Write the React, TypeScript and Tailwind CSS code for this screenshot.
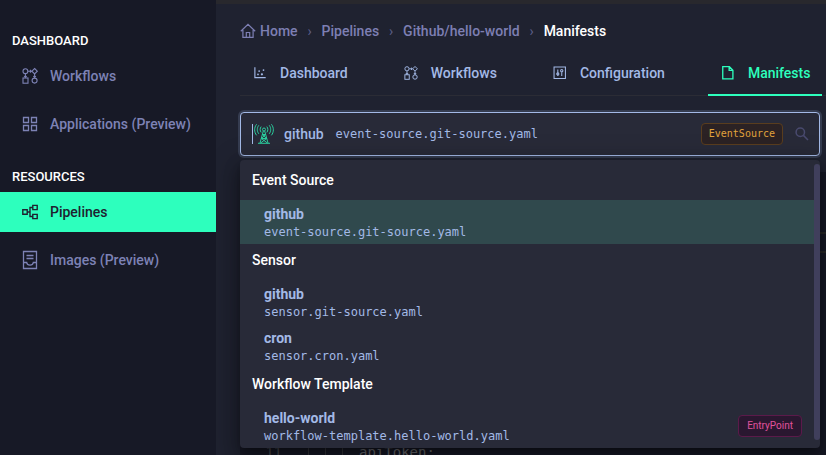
import React from "react";

type IconProps = { className?: string };

function FlowIcon({ className }: IconProps) {
  return (
    <svg viewBox="0 0 16 16" fill="none" stroke="currentColor" strokeWidth="1.1" className={className} aria-hidden="true">
      <circle cx="3.4" cy="3.2" r="2.4" />
      <path d="M12.6.5 15.3 3.2 12.6 5.9 9.9 3.2Z" />
      <rect x="1" y="10" width="5" height="5.2" />
      <circle cx="12.6" cy="12.6" r="2.5" />
      <path d="M6 3.2h3.6M8 1.9l1.4 1.3L8 4.5M3.4 5.8V10M2.1 8l1.3 1.5L4.7 8M12.6 6v4M11.3 8l1.3 1.5L13.9 8" />
    </svg>
  );
}

function GridIcon({ className }: IconProps) {
  return (
    <svg viewBox="0 0 16 16" fill="none" stroke="currentColor" strokeWidth="1.3" className={className} aria-hidden="true">
      <path d="M1.5 1.5h5v5h-5zM9.5 1.5h5v5h-5zM1.5 9.5h5v5h-5zM9.5 9.5h5v5h-5z" />
    </svg>
  );
}

function PipelineIcon({ className }: IconProps) {
  return (
    <svg viewBox="0 0 16 16" fill="none" stroke="currentColor" strokeWidth="1.4" className={className} aria-hidden="true">
      <path d="M.8 5.8h4.4v4.400H.8zM10.8 1.400h4.400v4.200h-4.400zM10.800 10.400h4.400v4.200h-4.400zM5.200 8H8M10.800 3.500H8v9h2.800" />
    </svg>
  );
}

function ImagesIcon({ className }: IconProps) {
  return (
    <svg viewBox="0 0 16 16" fill="none" stroke="currentColor" strokeWidth="1.3" className={className} aria-hidden="true">
      <path d="M1.500-.500h13v17h-13zM4.500 3.500h7M4.500 6.500h7M1.500 10.500h3.200c.5 3.500 6.100 3.500 6.600 0h3.200" />
    </svg>
  );
}

function HomeIcon({ className }: IconProps) {
  return (
    <svg viewBox="0 0 16 16" fill="none" stroke="currentColor" strokeWidth="1.2" className={className} aria-hidden="true">
      <path d="M.8 8.300 8 1.400l7.200 6.900M2.900 7v7.400h10.200V7M6.300 14.300V9.500h3.400v4.800" />
    </svg>
  );
}

function ChartIcon({ className }: IconProps) {
  return (
    <svg viewBox="0 0 16 16" fill="currentColor" className={className} aria-hidden="true">
      <path d="M1.500 1.500h1.300v11.200H14.500V14H1.500z" />
      <circle cx="5.700" cy="9.700" r="1" />
      <circle cx="7" cy="5.800" r="1" />
      <circle cx="10.200" cy="9.500" r="1.300" />
      <circle cx="12" cy="4.700" r="1" />
    </svg>
  );
}

function SlidersIcon({ className }: IconProps) {
  return (
    <svg viewBox="0 0 16 16" fill="none" stroke="currentColor" strokeWidth="1.2" className={className} aria-hidden="true">
      <path d="M1.200 1.200h13v13h-13zM5.500 4v7.500M10 7v4.500" />
      <circle cx="5.500" cy="9" r="1.200" />
      <circle cx="10" cy="5.400" r="1.300" />
    </svg>
  );
}

function FileIcon({ className }: IconProps) {
  return (
    <svg viewBox="0 0 16 16" fill="none" stroke="currentColor" strokeWidth="1.5" className={className} aria-hidden="true">
      <path d="M2 .8h7.600L13.600 4.800v9.900H2zM9.300.8V5h4.300" />
    </svg>
  );
}

function AntennaIcon({ className }: IconProps) {
  return (
    <svg viewBox="0 0 20 20" fill="none" stroke="currentColor" strokeWidth="1" className={className} aria-hidden="true">
      <circle cx="10" cy="5.500" r="1.500" />
      <path d="M9.300 7 6 19M10.700 7 14 19M4 19.300h12M8.400 10.500l4.200 4.200M11.600 10.500l-4.200 4.200M7.400 14.500l6 4.500M12.600 14.500l-6 4.500M8.500 10.500h3M7.400 14.500h5.200" />
      <path d="M7.200 2.600c-1.400 1.700-1.400 4.100 0 5.800M12.800 2.600c1.400 1.700 1.400 4.100 0 5.800M4.800 1.300c-2 2.500-2 6 0 8.500M15.200 1.300c2 2.500 2 6 0 8.500M2.600.300c-2.600 3.200-2.600 7.800 0 11M17.400.300c2.600 3.200 2.600 7.800 0 11" />
    </svg>
  );
}

function SearchIcon({ className }: IconProps) {
  return (
    <svg viewBox="0 0 14 14" fill="none" stroke="currentColor" strokeWidth="1.5" className={className} aria-hidden="true">
      <circle cx="5.300" cy="5.300" r="4.200" />
      <path d="m8.400 8.400 4.600 4.600" />
    </svg>
  );
}

type NavEntry = { label: string; Icon: (p: IconProps) => React.ReactElement; active?: boolean };

const navGroups: { title: string; items: NavEntry[] }[] = [
  {
    title: "DASHBOARD",
    items: [
      { label: "Workflows", Icon: FlowIcon },
      { label: "Applications (Preview)", Icon: GridIcon },
    ],
  },
  {
    title: "RESOURCES",
    items: [
      { label: "Pipelines", Icon: PipelineIcon, active: true },
      { label: "Images (Preview)", Icon: ImagesIcon },
    ],
  },
];

const tabs: NavEntry[] = [
  { label: "Dashboard", Icon: ChartIcon },
  { label: "Workflows", Icon: FlowIcon },
  { label: "Configuration", Icon: SlidersIcon },
  { label: "Manifests", Icon: FileIcon, active: true },
];

const manifestGroups = [
  { title: "Event Source", items: [{ name: "github", file: "event-source.git-source.yaml", selected: true, tag: "" }] },
  {
    title: "Sensor",
    items: [
      { name: "github", file: "sensor.git-source.yaml", selected: false, tag: "" },
      { name: "cron", file: "sensor.cron.yaml", selected: false, tag: "" },
    ],
  },
  {
    title: "Workflow Template",
    items: [{ name: "hello-world", file: "workflow-template.hello-world.yaml", selected: false, tag: "EntryPoint" }],
  },
];

const mono = "font-['DejaVu_Sans_Mono','Liberation_Mono',monospace]";

function Sidebar() {
  return (
    <nav className="flex w-[216px] shrink-0 flex-col gap-[25px] bg-[#171926] pt-[33px]" aria-label="Main">
      {navGroups.map((group) => (
        <section key={group.title}>
          <h2 className="mb-[7px] px-3 text-[13px] leading-4 font-medium text-white">{group.title}</h2>
          <ul className="flex flex-col gap-2">
            {group.items.map(({ label, Icon, active }) => (
              <li key={label}>
                <a
                  href="#"
                  aria-current={active ? "page" : undefined}
                  className={`flex h-10 items-center gap-3 px-[22px] text-sm font-medium ${
                    active ? "bg-[#2dffbd] text-[#1f2230]" : "text-[#7d82b5]"
                  }`}
                >
                  <Icon className="size-4 shrink-0 overflow-visible" />
                  {label}
                </a>
              </li>
            ))}
          </ul>
        </section>
      ))}
    </nav>
  );
}

function Breadcrumb() {
  return (
    <nav aria-label="Breadcrumb">
      <ol className="flex items-center text-sm leading-[22px] font-medium text-[#7d7fb3]">
        <li>
          <a href="#" className="flex items-center gap-1">
            <HomeIcon className="size-4" />
            Home
          </a>
        </li>
        {["Pipelines", "Github/hello-world"].map((label) => (
          <li key={label} className="flex">
            <span className="w-6 text-center font-normal text-[#5c5f88]">›</span>
            <a href="#">{label}</a>
          </li>
        ))}
        <li className="flex text-white" aria-current="page">
          <span className="w-6 text-center font-normal text-[#5c5f88]">›</span>
          Manifests
        </li>
      </ol>
    </nav>
  );
}

function Tabs() {
  return (
    <div role="tablist" className="mt-2.5 flex gap-[31px] border-b border-[#2b2c35]">
      {tabs.map(({ label, Icon, active }) => (
        <button
          key={label}
          type="button"
          role="tab"
          aria-selected={!!active}
          className={`-mb-px flex h-11 items-center gap-3 border-b-2 px-3 text-sm font-medium ${
            active ? "border-[#2dffbd] text-[#2dffbd]" : "border-transparent text-[#a3b9e6]"
          }`}
        >
          <Icon className="size-4 shrink-0 p-px" />
          {label}
        </button>
      ))}
    </div>
  );
}

function ManifestMenu() {
  return (
    <div
      role="listbox"
      aria-label="Manifests"
      className="absolute inset-x-0 top-full mt-1 flex overflow-hidden rounded bg-[#282a38] pt-1 shadow-[0_3px_6px_-4px_rgba(0,0,0,0.48),0_6px_16px_rgba(0,0,0,0.32),0_9px_28px_8px_rgba(0,0,0,0.2)]"
    >
      <div className="min-w-0 flex-1">
        {manifestGroups.map((group) => (
          <div key={group.title} role="group" aria-label={group.title}>
            <div className="mb-1 px-3 text-sm leading-8 font-medium text-white">{group.title}</div>
            {group.items.map((item) => (
              <div
                key={item.file}
                role="option"
                aria-selected={item.selected}
                className={`flex h-11 items-center justify-between pr-3 pl-6 ${item.selected ? "bg-[#30494d]" : ""}`}
              >
                <div className="text-[#a3b9e6]">
                  <div className="text-sm leading-5 font-bold">{item.name}</div>
                  <div className={`text-xs leading-4 ${mono}`}>{item.file}</div>
                </div>
                {item.tag && (
                  <span className="rounded border border-[#5b1a4a] bg-[#2a1730] px-2 text-[10px] leading-5 text-[#e0529c]">
                    {item.tag}
                  </span>
                )}
              </div>
            ))}
          </div>
        ))}
      </div>
      <div className="mb-2 w-1.5 rounded-full bg-[#403f5c]" />
    </div>
  );
}

function ManifestSelect() {
  return (
    <div className="relative z-10 mt-4 mr-1.5">
      <label className="flex h-11 items-center rounded border border-[#a3b9e6] bg-[#282a38] pr-2.5 pl-[11px] text-[#a3b9e6] shadow-[0_0_0_2px_#353c50]">
        <input
          type="text"
          role="combobox"
          aria-label="Manifest"
          aria-expanded="true"
          className="h-5 w-px bg-[#a3b9e6] outline-none"
        />
        <AntennaIcon className="ml-px size-5 text-[#2bcf9f]" />
        <span className="ml-2.5 text-sm font-medium">github</span>
        <span className={`ml-3 text-xs ${mono}`}>event-source.git-source.yaml</span>
        <span
          className={`ml-auto rounded border border-[#593d1e] bg-[#2b2224] px-[7px] text-[10px] leading-5 text-[#e0a33c] ${mono}`}
        >
          EventSource
        </span>
        <SearchIcon className="ml-3 size-3.5 text-[#494a6e]" />
      </label>
      <ManifestMenu />
    </div>
  );
}

function Editor() {
  return (
    <div className={`mt-4 bg-[#171926] text-sm leading-[21px] text-[#6b6c70] ${mono}`}>
      <div className="h-[60px]" />
      <div className="h-[21px] border-y-2 border-[#282828]" />
      <div className="h-[189px]" />
      <div className="flex">
        <span className="w-[42px] text-right text-[#4a4b50]">11</span>
        <span className="ml-[26px] w-[17px] border-l border-[#35363b]" />
        <span className="w-[17px] border-l border-[#35363b]" />
        <span className="w-[17px] border-l border-[#35363b]" />
        <span>apiToken:</span>
      </div>
    </div>
  );
}

export default function App() {
  return (
    <div className="flex h-screen overflow-hidden bg-[#1f2230] font-[Roboto,sans-serif]">
      <Sidebar />
      <main className="min-w-0 flex-1 overflow-hidden border-t-4 border-[#28282d] pt-4 pl-6">
        <Breadcrumb />
        <Tabs />
        <ManifestSelect />
        <Editor />
      </main>
    </div>
  );
}
